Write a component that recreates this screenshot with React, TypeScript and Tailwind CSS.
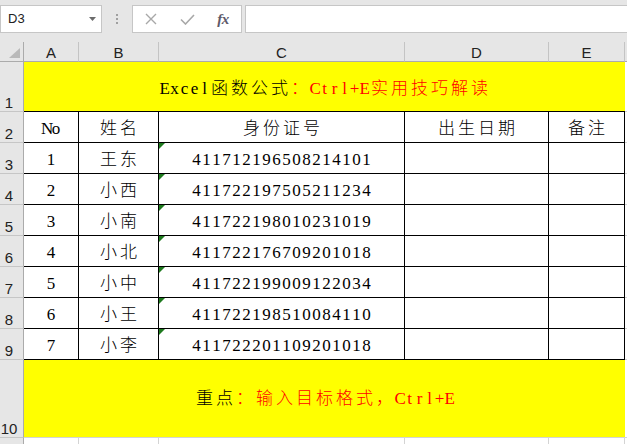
import React from 'react';

const COLS = ['A', 'B', 'C', 'D', 'E'];

const ROWS: [string, string, string][] = [
  ['1', '王东', '411712196508214101'],
  ['2', '小西', '411722197505211234'],
  ['3', '小南', '411722198010231019'],
  ['4', '小北', '411722176709201018'],
  ['5', '小中', '411722199009122034'],
  ['6', '小王', '411722198510084110'],
  ['7', '小李', '411722201109201018'],
];

// SimSun-like layout: half-width chars take 10px, full-width chars 20px
const Txt: React.FC<{ text: string }> = ({ text }) => (
  <span className="whitespace-nowrap">
    {Array.from(text).map((ch, i) => (
      <span
        key={i}
        className={ch.charCodeAt(0) > 0x2000 ? 'inline-block w-[20px] text-center font-light' : 'inline-block w-[10px] text-center'}
      >
        {ch}
      </span>
    ))}
  </span>
);

const RowHead: React.FC<{ n: string; h: string }> = ({ n, h }) => (
  <div
    className={`${h} bg-[#e6e6e6] border-r border-r-[#ababab] border-b border-b-[#c6c6c6] flex items-end justify-center pr-[5px] font-['Liberation_Sans',sans-serif] text-[15px] leading-[15px] text-[#222] pb-[1px]`}
  >
    {n}
  </div>
);

const Cell: React.FC<{ children?: React.ReactNode; flag?: boolean }> = ({ children, flag }) => (
  <div className="relative h-[31px] bg-white border-r border-b border-black flex items-center justify-center pt-[4px] leading-[20px]">
    {flag && (
      <span className="absolute left-0 top-0 w-0 h-0 border-t-[6px] border-r-[6px] border-t-[#1e7a1e] border-r-transparent" />
    )}
    {children}
  </div>
);

const Filler: React.FC<{ h: string }> = ({ h }) => (
  <div className={`${h} bg-white border-b border-b-[#d4d4d4]`} />
);

export default function App() {
  return (
    <div className="w-[627px] h-[444px] overflow-hidden bg-[#e6e6e6] select-none">
      {/* Formula bar */}
      <div className="h-[42px] flex items-start pt-[5px]">
        <div className="w-[102px] h-[28px] bg-white border border-[#c6c6c6] flex items-center justify-between pl-[7px] pr-[5px]">
          <span className="font-['Liberation_Sans',sans-serif] text-[13px] text-[#222]">D3</span>
          <svg width="7" height="4" viewBox="0 0 7 4">
            <path d="M0 0 L7 0 L3.5 4 Z" fill="#6b6b6b" />
          </svg>
        </div>
        <div className="w-[30px] h-[28px] flex flex-col items-center justify-center gap-[2px]">
          <span className="w-[2px] h-[2px] bg-[#a0a0a0]" />
          <span className="w-[2px] h-[2px] bg-[#a0a0a0]" />
          <span className="w-[2px] h-[2px] bg-[#a0a0a0]" />
        </div>
        <div className="w-[110px] h-[28px] bg-white border border-[#c6c6c6] flex items-center">
          <div className="w-[37px] flex justify-center">
            <svg width="12" height="12" viewBox="0 0 12 12">
              <path d="M1 1 L11 11 M11 1 L1 11" stroke="#a8a8a8" strokeWidth="1.4" />
            </svg>
          </div>
          <div className="w-[37px] flex justify-center">
            <svg width="15" height="11" viewBox="0 0 15 11">
              <path d="M1 5.5 L5.5 10 L14 1" stroke="#a8a8a8" strokeWidth="1.6" fill="none" />
            </svg>
          </div>
          <div className="w-[37px] flex justify-center">
            <span className="font-['Liberation_Serif',serif] italic font-bold text-[15px] leading-none text-[#5e5a6a] tracking-[-0.5px]">
              fx
            </span>
          </div>
        </div>
        <div className="flex-1 ml-[3px] h-[28px] bg-white border border-r-0 border-[#c6c6c6]" />
      </div>

      {/* Sheet */}
      <div className="grid grid-cols-[24px_55px_80px_246px_144px_76px_1fr] font-['Liberation_Serif','Noto_Sans_CJK_SC',serif] text-[17px] text-black">
        {/* column headers */}
        <div className="h-[20px] bg-[#e6e6e6] border-r border-b border-[#ababab] flex items-end justify-end pr-[3px] pb-[3px]">
          <svg width="11" height="10" viewBox="0 0 11 10">
            <path d="M11 0 L11 10 L0 10 Z" fill="#b9b9b9" />
          </svg>
        </div>
        {COLS.map((c) => (
          <div
            key={c}
            className="h-[20px] bg-[#e6e6e6] border-r border-r-[#c4c4c4] border-b border-b-[#ababab] flex items-center justify-center pt-[2px] font-['Liberation_Sans',sans-serif] text-[15px] leading-none text-[#222]"
          >
            {c}
          </div>
        ))}
        <div className="h-[20px] bg-[#e6e6e6] border-b border-b-[#ababab]" />

        {/* row 1 */}
        <RowHead n="1" h="h-[50px]" />
        <div className="col-span-5 h-[50px] bg-[#ffff00] border-b border-black flex items-center justify-center pt-[4px] leading-[20px]">
          <span>
            <Txt text="Excel函数公式" />
            <span className="text-[#ff0000]">
              <Txt text="：Ctrl+E实用技巧解读" />
            </span>
          </span>
        </div>
        <Filler h="h-[50px]" />

        {/* row 2 */}
        <RowHead n="2" h="h-[31px]" />
        <Cell><Txt text="No" /></Cell>
        <Cell><Txt text="姓名" /></Cell>
        <Cell><Txt text="身份证号" /></Cell>
        <Cell><Txt text="出生日期" /></Cell>
        <Cell><Txt text="备注" /></Cell>
        <Filler h="h-[31px]" />

        {/* data rows */}
        {ROWS.map((r, i) => (
          <React.Fragment key={r[0]}>
            <RowHead n={String(i + 3)} h="h-[31px]" />
            <Cell><Txt text={r[0]} /></Cell>
            <Cell><Txt text={r[1]} /></Cell>
            <Cell flag><Txt text={r[2]} /></Cell>
            <Cell />
            <Cell />
            <Filler h="h-[31px]" />
          </React.Fragment>
        ))}

        {/* row 10 */}
        <RowHead n="10" h="h-[78px]" />
        <div className="col-span-5 h-[78px] bg-[#ffff00] border-b border-b-[#d4d4d4] flex items-center justify-center pt-[1px] leading-[20px]">
          <span>
            <Txt text="重点" />
            <span className="text-[#ff0000]">
              <Txt text="：输入目标格式，Ctrl+E" />
            </span>
          </span>
        </div>
        <Filler h="h-[78px]" />

        {/* row 11 */}
        <RowHead n="11" h="h-[20px]" />
        {COLS.map((c) => (
          <div key={c} className="h-[20px] bg-white border-r border-r-[#d4d4d4]" />
        ))}
        <div className="h-[20px] bg-white" />
      </div>
    </div>
  );
}
